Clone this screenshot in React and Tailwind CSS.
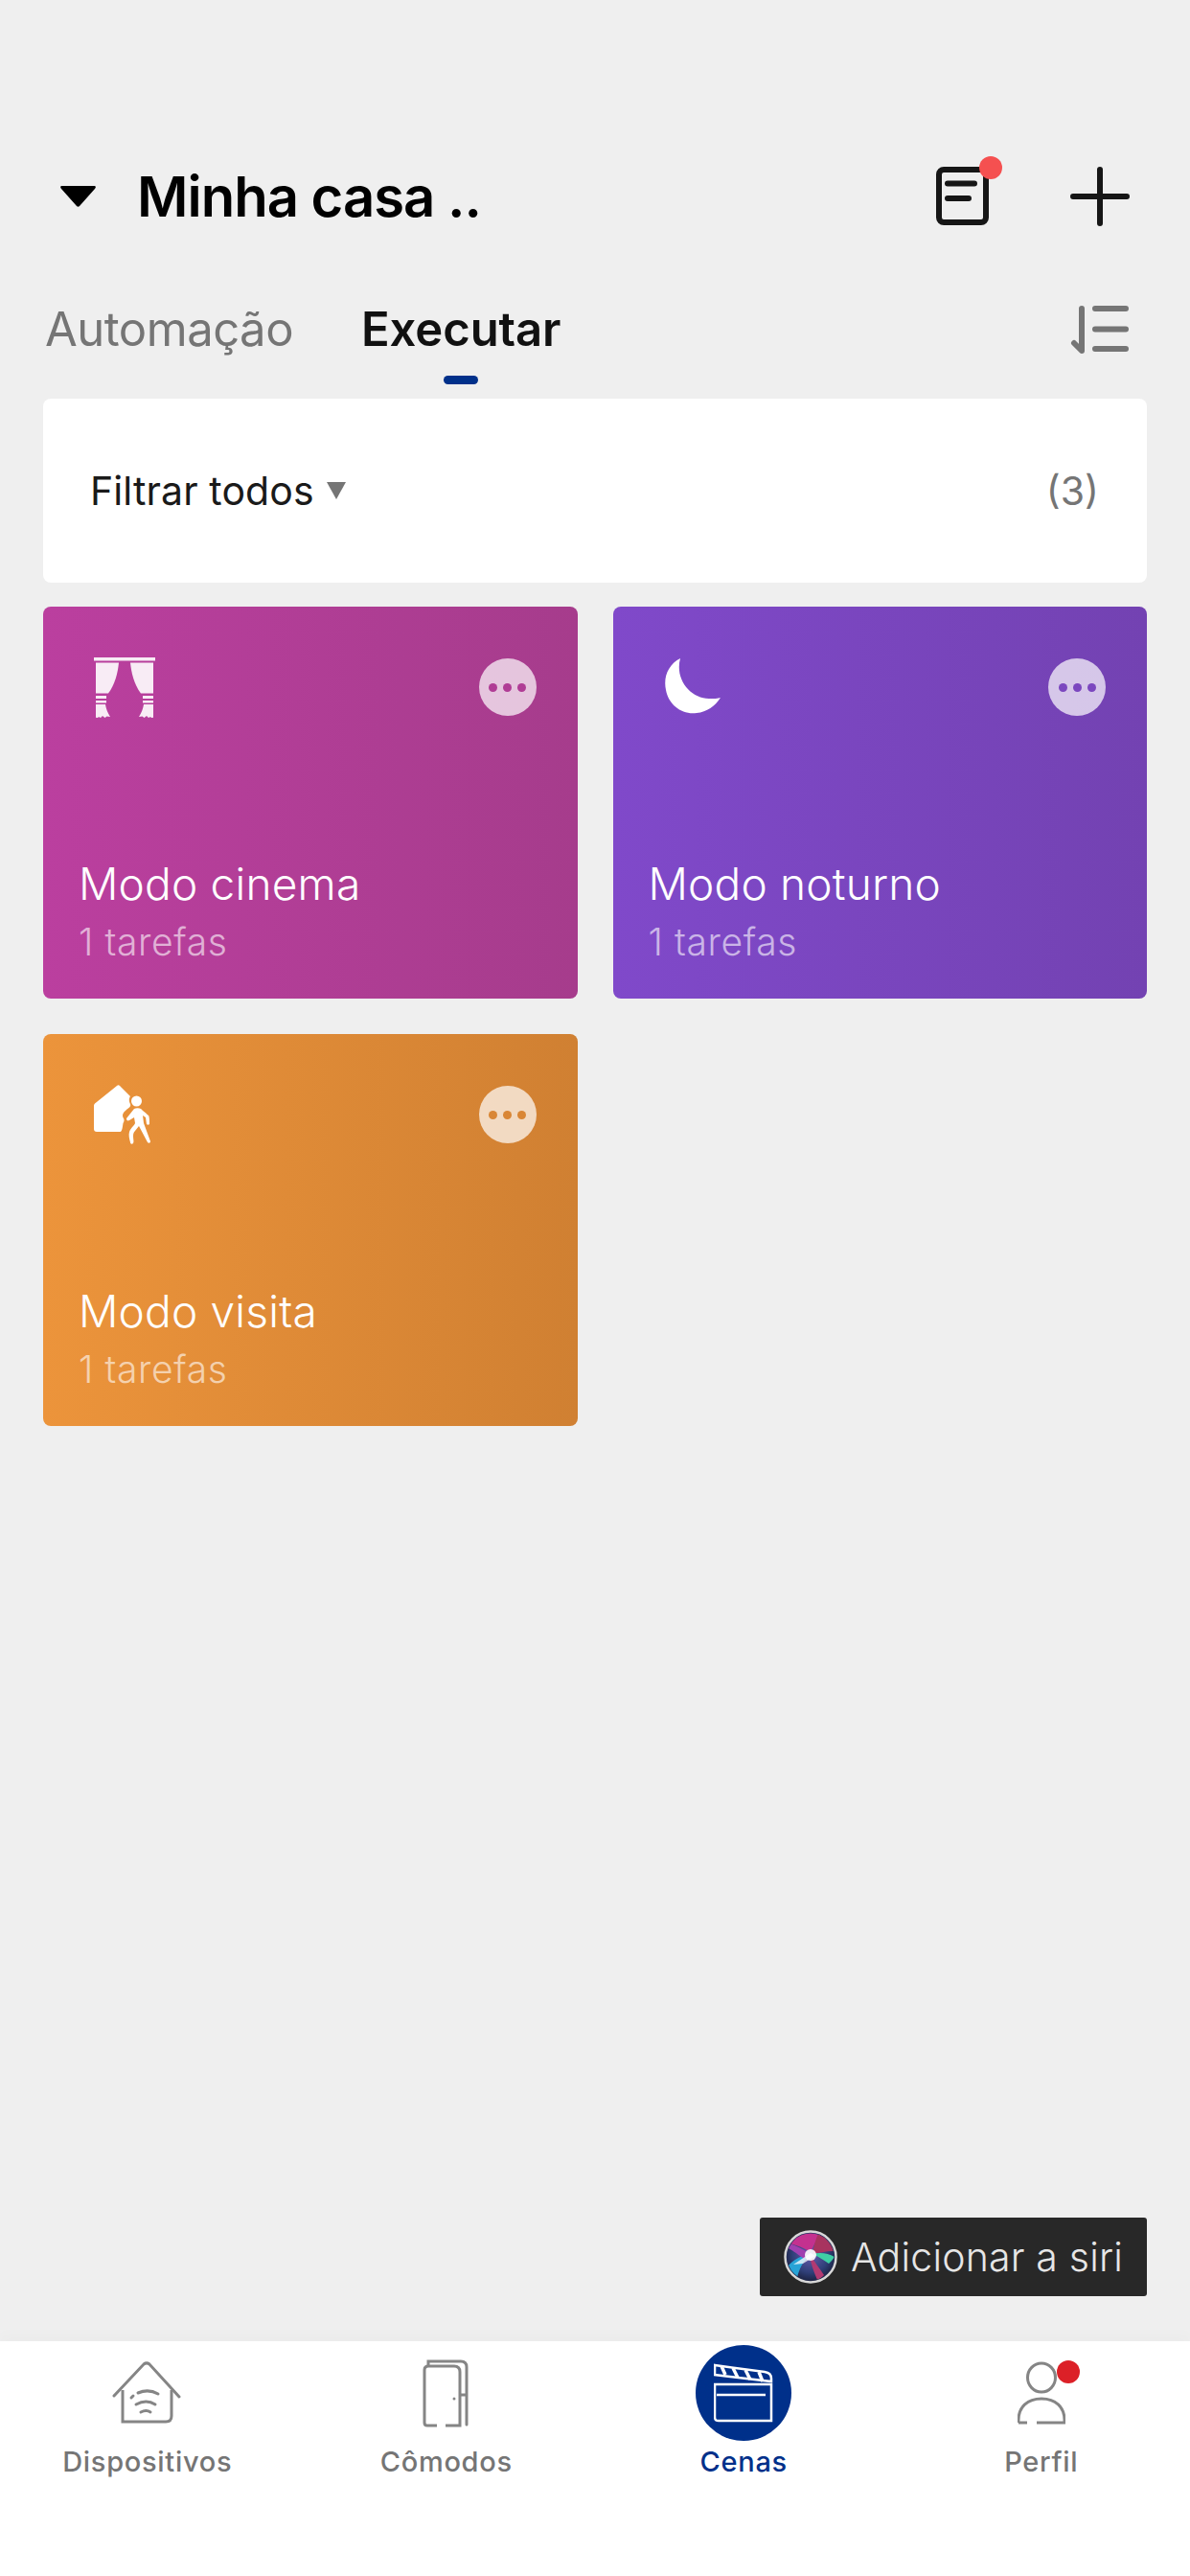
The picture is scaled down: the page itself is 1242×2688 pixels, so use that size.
import React from "react";

function DocIcon() {
  return (
    <div className="relative w-[66px] h-[70px]">
      <svg width="66" height="70" viewBox="0 0 66 70" className="block">
        <rect x="6" y="7" width="49" height="55" rx="5" fill="none" stroke="#161616" strokeWidth="6" />
        <path d="M15 21.500h28M15 37h22" stroke="#161616" strokeWidth="6" strokeLinecap="round" />
      </svg>
      <span className="absolute left-[48px] top-[-7px] w-[24px] h-[24px] rounded-full bg-[#f55050]" />
    </div>
  );
}

function PlusIcon() {
  return (
    <svg width="62" height="62" viewBox="0 0 62 62" className="block">
      <path d="M31 3v56M3 31h56" stroke="#161616" strokeWidth="6" strokeLinecap="round" />
    </svg>
  );
}

function SortIcon() {
  return (
    <svg width="62" height="52" viewBox="0 0 62 52" className="block">
      <path d="M12 3v44L4 39" fill="none" stroke="#757575" strokeWidth="6" strokeLinecap="round" strokeLinejoin="round" />
      <path d="M26 3h32M26 24.500h32M26 45h32" stroke="#757575" strokeWidth="6" strokeLinecap="round" />
    </svg>
  );
}

function Curtain() {
  return (
    <svg width="64" height="64" viewBox="0 0 64 64" className="block" fill="#ffffff" fillOpacity="0.9">
      <rect x="0" y="0" width="64" height="3.500" />
      <path d="M2 5.500h24c-1 10-4 23-11 32H2z" />
      <rect x="2" y="40" width="11" height="3" />
      <rect x="2" y="45" width="11" height="2.500" />
      <path d="M2 49h10c.6 4 2 8 5 13l-3.500-.5-2 1.500-2.500-2-2 2-2-1-1 1-2-.2z" />
      <path d="M62 5.500H38c1 10 4 23 11 32h13z" />
      <rect x="51" y="40" width="11" height="3" />
      <rect x="51" y="45" width="11" height="2.500" />
      <path d="M62 49H52c-.6 4-2 8-5 13l3.500-.5 2 1.500 2.500-2 2 2 2-1 1 1 2-.2z" />
    </svg>
  );
}

function Moon() {
  return (
    <svg width="64" height="64" viewBox="0 0 64 64" className="block">
      <path d="M17 1C5 7-1 20 2 34c3 16 17 26 32 24 11-1 19-7 25-16-2 1-8 1-12 1C28 43 11 23 17 1z" fill="#ffffff" />
    </svg>
  );
}

function Visit() {
  return (
    <svg width="64" height="66" viewBox="0 0 64 66" className="block" fill="#ffffff">
      <path d="M24 1c1-1 2-1 3 0l11 11c-2 3-1 6 0 8 1 3-2 4-4 6-4 3-5 6-3 9 1 2 .5 3-.5 5-.5 3-1 9-3 9H3c-2 0-3-1-3-3V22c0-1 .500-2 1-2.500z" />
      <circle cx="44.500" cy="17" r="5.500" />
      <path d="M42 25c2-1 5-1 7 0 1 1 7 6 8 7 1 1 1 6 1 9-1 1-2 1-3 0l-1-7-3-2 1 8 7 19c0 2-2 2-3 1l-9-17-4 5c-2 2-2 4-2 6 0 3 1 5 0 7-1 1-3 1-3-1-1-4-2-7-1-11 2-5 5-6 6-9l-1-6-5 3c-2 1-3 0-3-2z" />
    </svg>
  );
}

function Dots({ color }) {
  return (
    <div className="w-[60px] h-[60px] rounded-full bg-[#ffffff]/70 flex items-center justify-center gap-[6px]">
      <span className={`w-[9px] h-[9px] rounded-full ${color}`} />
      <span className={`w-[9px] h-[9px] rounded-full ${color}`} />
      <span className={`w-[9px] h-[9px] rounded-full ${color}`} />
    </div>
  );
}

function Card({ title, gradient, dot, icon }) {
  return (
    <div className={`h-[409px] rounded-[8px] flex flex-col ${gradient}`}>
      <div className="flex justify-between items-start pt-[53px] pl-[53px] pr-[43px] h-[171px]">
        {icon}
        <div className="mt-[1px]"><Dots color={dot} /></div>
      </div>
      <div className="pl-[37px] pt-[88px]">
        <div className="text-[46px] leading-[60px] text-white font-light tracking-[0.2px]">{title}</div>
        <div className="mt-[6px] text-[39px] leading-[50px] text-white/60 font-light tracking-[0.6px]">1 tarefas</div>
      </div>
    </div>
  );
}

function HomeIcon() {
  return (
    <svg width="72" height="66" viewBox="0 0 72 66" className="block mr-[5px]" fill="none" stroke="#858585" strokeWidth="3">
      <path d="M2 36 33 3c2-1.500 4-1.500 6 0l31 34" strokeLinecap="round" />
      <path d="M11 30v33h45c4 0 6-2 6-6V30" />
      <path d="M20 38l2-2M27 33c7-3 14-3 21 1M25 45c7-4 14-4 20 0M30 53c4-2 7-2 10 0" strokeLinecap="round" />
    </svg>
  );
}

function DoorIcon() {
  return (
    <svg width="50" height="72" viewBox="0 0 50 72" className="block" fill="none" stroke="#858585" strokeWidth="3">
      <path d="M6 7V3h34c4 0 6 2 6 6v60" strokeLinecap="round" />
      <path d="M15 70H5c-2 0-3-1-3-3V12c0-3 2-4 4-4h27c4 0 6 2 6 6v56H24" />
      <path d="M39 38h7" />
      <circle cx="33" cy="42" r="1.500" fill="#858585" stroke="none" />
    </svg>
  );
}

function Clapper() {
  return (
    <div className="w-[100px] h-[100px] rounded-full bg-[#00308a] flex items-center justify-center">
      <svg width="62" height="62" viewBox="0 0 62 62" className="block" fill="none" stroke="#ffffff" strokeWidth="2.500">
        <path d="M1 2l52 7c4 .5 7 3 7 7v3L1 12z" />
        <path d="M8 3l4 9M20 5l5 10M33 7l5 10M47 9l4 10" strokeWidth="3.500" />
        <path d="M1 22h59v38H5c-3 0-4-1-4-4z" />
        <path d="M3 33h51" />
      </svg>
    </div>
  );
}

function PersonIcon() {
  return (
    <div className="relative w-[50px] h-[66px]">
      <svg width="50" height="66" viewBox="0 0 50 66" className="block" fill="none" stroke="#858585" strokeWidth="3">
        <ellipse cx="25" cy="17" rx="14.500" ry="15" />
        <path d="M1 64c-1-17 10-25 24-25s25 8 24 25H20M1 64h9" />
      </svg>
      <span className="absolute left-[41px] top-[-1px] w-[24px] h-[24px] rounded-full bg-[#dc2027]" />
    </div>
  );
}

function Siri() {
  return (
    <svg width="56" height="56" viewBox="0 0 56 56" className="block">
      <defs>
        <radialGradient id="siriBg" cx="50%" cy="45%" r="60%">
          <stop offset="0%" stopColor="#6a5bb0" />
          <stop offset="60%" stopColor="#2f3f78" />
          <stop offset="100%" stopColor="#15172c" />
        </radialGradient>
        <clipPath id="siriClip"><circle cx="28" cy="28" r="24.500" /></clipPath>
      </defs>
      <circle cx="28" cy="28" r="26.500" fill="url(#siriBg)" stroke="#d8d8d8" strokeWidth="2.500" />
      <g clipPath="url(#siriClip)">
        <path d="M6 14C14 2 28 0 38 5c-4 6-8 13-10 18-6-4-14-7-22-9z" fill="#c4318f" />
        <path d="M36 4c8 3 14 10 16 18-8 0-16 2-22 3 1-7 3-15 6-21z" fill="#a8345f" />
        <path d="M4 38c6-7 14-12 23-12-6 6-11 14-13 24-5-3-8-7-10-12z" fill="#27a3d6" />
        <path d="M30 25c8-2 16-1 23 3-2 3-4 5-6 7-6-4-12-8-17-10z" fill="#3fd0a5" />
        <path d="M27 26c1 8 4 17 8 26 3-1 5-3 7-5-5-7-10-15-15-21z" fill="#b23a72" />
        <path d="M5 14c8 2 16 6 22 11-2 1-4 3-6 5C13 24 7 20 3 18z" fill="#a040b0" />
        <circle cx="28" cy="26" r="6" fill="#ffffff" fillOpacity="0.9" />
        <path d="M10 36 28 24l5 3-13 8z" fill="#ffffff" fillOpacity="0.75" />
      </g>
    </svg>
  );
}

function Tab({ label, icon, active, nudge }) {
  return (
    <div className="flex flex-col items-center">
      <div className="h-[108px] flex items-center justify-center">{icon}</div>
      <div className={`text-[29px] leading-[36px] font-medium tracking-[0.7px] ${nudge || ""} ${active ? "text-[#00308a]" : "text-[#757575]"}`}>{label}</div>
    </div>
  );
}

export default function App() {
  return (
    <div className="h-[2688px] w-[1242px] bg-[#efefef] flex flex-col overflow-hidden font-[Inter,sans-serif]">
      <header className="flex items-center h-[70px] mt-[170px] pl-[63px] pr-[63px]">
        <svg width="37" height="22" viewBox="0 0 37 22" className="block">
          <path d="M2 0h33c2 0 2.500 1.500 1 3L20 21c-1 1-2 1-3 0L1 3C-.5 1.500 0 0 2 0z" fill="#000000" />
        </svg>
        <div className="ml-[43px] text-[58px] leading-[70px] font-semibold text-black tracking-[-1px]">Minha casa ..</div>
        <div className="ml-auto mr-[77px]"><DocIcon /></div>
        <PlusIcon />
      </header>

      <div className="flex items-start h-[176px] pl-[47px] pr-[63px] pt-[74px]">
        <div className="text-[49px] leading-[60px] text-[#757575] tracking-[-0.5px]">Automação</div>
        <div className="ml-[71px] flex flex-col items-center">
          <div className="text-[49px] leading-[60px] font-semibold text-[#111111] tracking-[-0.1px]">Executar</div>
          <span className="mt-[18px] w-[36px] h-[9px] rounded-full bg-[#00308a]" />
        </div>
        <div className="ml-auto mt-[5px]"><SortIcon /></div>
      </div>

      <div className="mx-[45px] h-[192px] rounded-[8px] bg-white flex items-center pl-[49px] pr-[50px] shrink-0">
        <span className="text-[41px] leading-[50px] text-[#1a1a1a] tracking-[0.1px]">Filtrar todos</span>
        <svg width="20" height="18" viewBox="0 0 20 18" className="block ml-[13px] -mt-[1px]">
          <path d="M0 0h20L10 18z" fill="#757575" />
        </svg>
        <span className="ml-auto text-[41px] leading-[50px] text-[#757575]">(3)</span>
      </div>

      <div className="mx-[45px] mt-[25px] grid grid-cols-2 gap-[37px]">
        <Card title="Modo cinema" gradient="bg-gradient-to-r from-[#bb3f9f] to-[#a63c8c]" dot="bg-[#b03c95]" icon={<Curtain />} />
        <Card title="Modo noturno" gradient="bg-gradient-to-r from-[#8049ca] to-[#7342b2]" dot="bg-[#7b47bf]" icon={<Moon />} />
        <Card title="Modo visita" gradient="bg-gradient-to-r from-[#ec943b] to-[#d08032]" dot="bg-[#d98635]" icon={<Visit />} />
      </div>

      <div className="mt-auto mb-[47px] mr-[45px] self-end w-[404px] h-[82px] rounded-[3px] bg-[#282828] flex items-center pl-[25px]">
        <Siri />
        <span className="ml-[14px] text-[41px] leading-[50px] text-[#e6e6e6] font-light tracking-[0.2px]">Adicionar a siri</span>
      </div>

      <nav className="h-[245px] bg-white grid grid-cols-4 shrink-0 shadow-[0_-8px_12px_rgba(0,0,0,0.015)]">
        <Tab label="Dispositivos" nudge="mr-[3px]" icon={<HomeIcon />} />
        <Tab label="Cômodos" icon={<DoorIcon />} />
        <Tab label="Cenas" active icon={<Clapper />} />
        <Tab label="Perfil" icon={<PersonIcon />} />
      </nav>
    </div>
  );
}
